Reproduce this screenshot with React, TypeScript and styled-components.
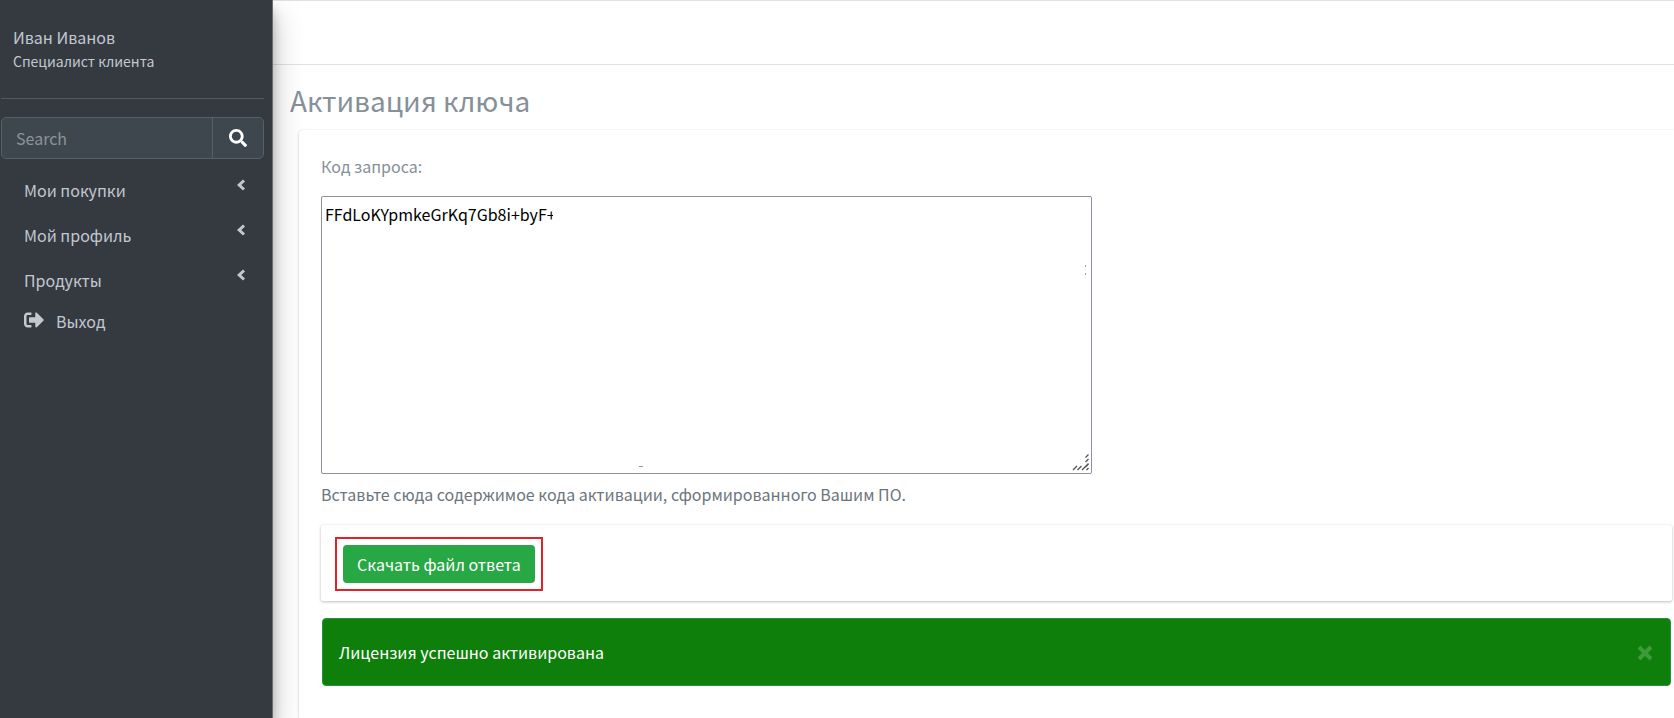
import React from "react";
import styled, { createGlobalStyle } from "styled-components";
import { FaSearch, FaSignOutAlt } from "react-icons/fa";

const GlobalStyle = createGlobalStyle`
  *, *::before, *::after { box-sizing: border-box; }
  body {
    margin: 0;
    background: #fff;
    color: #869099;
    font-family: "Noto Sans CJK SC", "Noto Sans", sans-serif;
    font-size: 16px;
    line-height: 24px;
  }
  button, input, textarea { font: inherit; }
`;

const Page = styled.div`
  display: grid;
  grid-template-columns: 273px minmax(0, 1fr);
  min-height: 100vh;
`;

const Sidebar = styled.aside`
  position: relative;
  z-index: 1;
  padding: 1px 8px 16px 1px;
  background: #343a40;
  border-right: 1px solid #6a6e73;
  color: #c2c7d0;
  box-shadow: 0 14px 28px rgba(0, 0, 0, 0.25), 0 10px 10px rgba(0, 0, 0, 0.22);
`;

const UserPanel = styled.div`
  height: 98px;
  padding: 24px 12px 0;
  border-bottom: 1px solid #4f5962;
`;

const UserName = styled.div`
  line-height: 24px;
`;

const UserRole = styled.div`
  font-size: 14px;
  line-height: 24px;
`;

const SearchForm = styled.form`
  display: flex;
  height: 42px;
  margin: 18px 0 8px;
  border: 1px solid #56606a;
  border-radius: 5px;
  background: #3f474e;
  overflow: hidden;
`;

const SearchInput = styled.input`
  flex: 1;
  min-width: 0;
  padding: 0 14px;
  border: 0;
  background: transparent;
  color: #fff;
  &::placeholder { color: #8b949c; opacity: 1; }
`;

const SearchButton = styled.button`
  display: grid;
  place-items: center;
  width: 51px;
  padding: 0;
  border: 0;
  border-left: 1px solid #56606a;
  background: transparent;
  color: #fff;
  font-size: 18px;
`;

const Menu = styled.nav`
  display: flex;
  flex-direction: column;
`;

const MenuLink = styled.a<{ $compact?: boolean }>`
  display: flex;
  align-items: center;
  justify-content: ${(p) => (p.$compact ? "flex-start" : "space-between")};
  gap: 12px;
  height: ${(p) => (p.$compact ? 38 : 45)}px;
  padding: 0 18px 0 23px;
  color: inherit;
  text-decoration: none;
`;

const Chevron = styled.svg`
  width: 9px;
  height: 12px;
  margin-bottom: 10px;
`;

const ExitIcon = styled(FaSignOutAlt)`
  width: 20px;
  height: 20px;
  margin-bottom: 2px;
`;

const Main = styled.main`
  border-top: 1px solid #dee2e6;
`;

const TopBar = styled.header`
  height: 64px;
  border-bottom: 1px solid #dee2e6;
`;

const Title = styled.h1`
  margin: 17px 0 12px 17px;
  font-size: 28px;
  line-height: 36px;
  font-weight: 400;
`;

const Card = styled.section`
  min-height: 588px;
  margin-left: 26px;
  padding: 24px 2px 0 22px;
  border-radius: 4px 0 0 0;
  box-shadow: 0 0 1px rgba(0, 0, 0, 0.13), 0 1px 3px rgba(0, 0, 0, 0.2);
`;

const Label = styled.label`
  display: block;
  margin-bottom: 18px;
`;

const CodeField = styled.div`
  position: relative;
  max-width: 771px;
  height: 278px;
`;

const CodeArea = styled.textarea`
  display: block;
  width: 100%;
  height: 100%;
  padding: 5px 3px;
  border: 1px solid #8f8f9d;
  border-radius: 2px;
  background: #fff;
  color: #000;
  resize: both;
  &::-webkit-resizer { background: transparent; }
`;

const Overlay = styled.svg`
  position: absolute;
  inset: 0;
  width: 100%;
  height: 100%;
  pointer-events: none;
`;

const ResizeGrip = styled.svg`
  position: absolute;
  right: 2px;
  bottom: 2px;
  pointer-events: none;
`;

const Help = styled.small`
  display: block;
  margin: 8px 0 19px;
  color: #6c757d;
  font-size: 16px;
`;

const ActionCard = styled.div`
  display: flex;
  padding: 12px 14px 10px;
  border-radius: 2px;
  box-shadow: 0 0 1px rgba(0, 0, 0, 0.13), 0 1px 3px rgba(0, 0, 0, 0.25);
`;

const Highlight = styled.div`
  padding: 6px;
  border: 2px solid #e32227;
`;

const DownloadButton = styled.button`
  display: block;
  height: 38px;
  padding: 0 14px;
  border: 0;
  border-radius: 4px;
  background: #28a745;
  color: #fff;
  line-height: 38px;
`;

const Alert = styled.div`
  display: flex;
  align-items: center;
  justify-content: space-between;
  height: 68px;
  margin: 17px 1px 0;
  padding: 0 16px;
  border: 1px solid #23923d;
  border-radius: 4px;
  background: #0e7f0a;
  color: #fff;
`;

const CloseButton = styled.button`
  display: grid;
  padding: 2px 0 0;
  border: 0;
  background: transparent;
  color: #3f9a3b;
`;

const sections = ["Мои покупки", "Мой профиль", "Продукты"];

export default function App() {
  return (
    <>
      <GlobalStyle />
      <Page>
        <Sidebar>
          <UserPanel>
            <UserName>Иван Иванов</UserName>
            <UserRole>Специалист клиента</UserRole>
          </UserPanel>
          <SearchForm>
            <SearchInput type="search" placeholder="Search" aria-label="Search" />
            <SearchButton type="button" aria-label="Search">
              <FaSearch />
            </SearchButton>
          </SearchForm>
          <Menu>
            {sections.map((name) => (
              <MenuLink href="#" key={name}>
                {name}
                <Chevron viewBox="0 0 9 12" aria-hidden="true">
                  <path d="M7 1.500L2.200 6L7 10.500" fill="none" stroke="currentColor" strokeWidth="3" />
                </Chevron>
              </MenuLink>
            ))}
            <MenuLink href="#" $compact>
              <ExitIcon />
              Выход
            </MenuLink>
          </Menu>
        </Sidebar>
        <Main>
          <TopBar />
          <Title>Активация ключа</Title>
          <Card>
            <Label htmlFor="code">Код запроса:</Label>
            <CodeField>
              <CodeArea id="code" spellCheck={false} defaultValue="FFdLoKYpmkeGrKq7Gb8i+byF+" />
              <Overlay aria-hidden="true">
                <rect x="232" y="10" width="20" height="20" fill="#fff" />
                <path d="M764.5 69v2M764.5 77v2" stroke="#999" />
                <path d="M318 270.500h4" stroke="#999" />
              </Overlay>
              <ResizeGrip width="18" height="18" viewBox="0 0 18 18" aria-hidden="true">
                <path
                  d="M1 16l4-4M5.500 16l4-4M10 16L16.500 9.500M14.500 16l2-2M13.500 13l3-3M13.500 8l3-3M13.500 3.500l3-3"
                  stroke="#555"
                  strokeWidth="1.300"
                  fill="none"
                />
              </ResizeGrip>
            </CodeField>
            <Help>Вставьте сюда содержимое кода активации, сформированного Вашим ПО.</Help>
            <ActionCard>
              <Highlight>
                <DownloadButton type="button">Скачать файл ответа</DownloadButton>
              </Highlight>
            </ActionCard>
            <Alert role="alert">
              Лицензия успешно активирована
              <CloseButton type="button" aria-label="Close">
                <svg width="18" height="18" viewBox="0 0 18 18" aria-hidden="true">
                  <path d="M3 3l12 12M15 3L3 15" stroke="currentColor" strokeWidth="4" />
                </svg>
              </CloseButton>
            </Alert>
          </Card>
        </Main>
      </Page>
    </>
  );
}
